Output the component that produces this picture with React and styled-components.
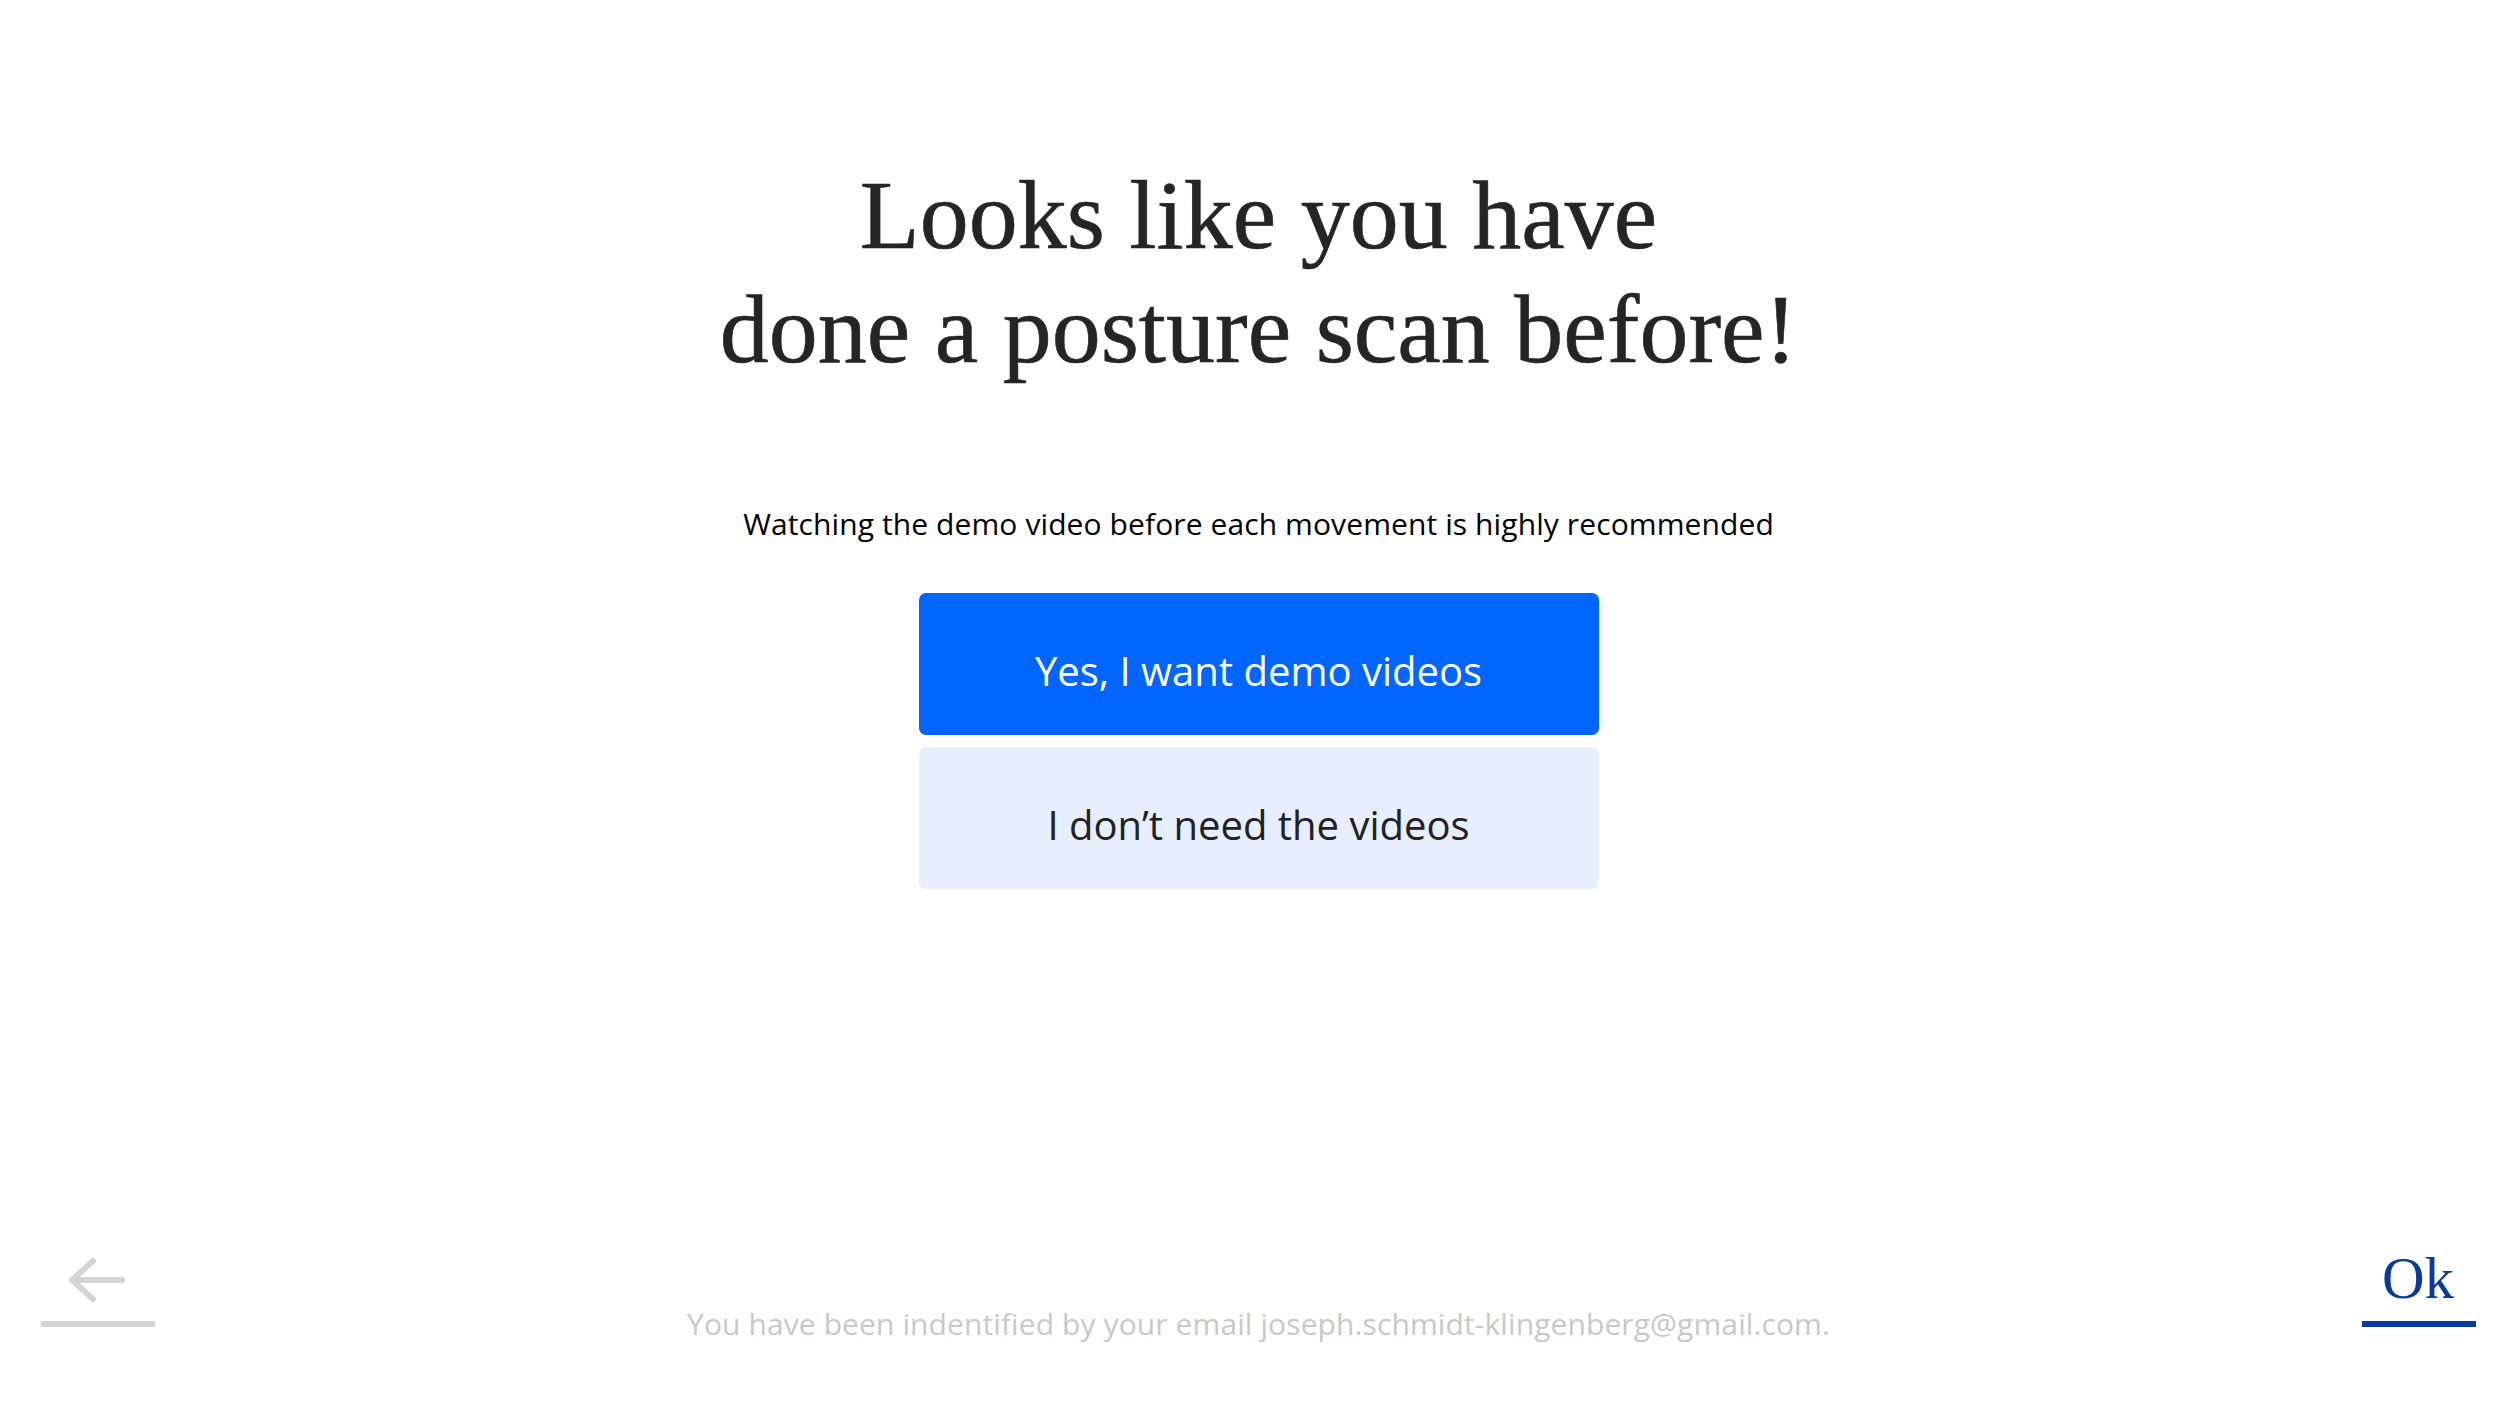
import React from "react";
import styled, { createGlobalStyle } from "styled-components";

const GlobalStyle = createGlobalStyle`
  html, body { margin: 0; padding: 0; background: #ffffff; }
  body { font-family: "Open Sans", "Noto Sans", sans-serif; }
  * { box-sizing: border-box; }
`;

const Page = styled.div`
  min-height: 100vh;
  display: flex;
  flex-direction: column;
  padding-left: 17px;
`;

const Main = styled.main`
  display: flex;
  flex-direction: column;
  align-items: center;
  padding-top: 158px;
`;

const Heading = styled.h1`
  margin: 0;
  font-family: "Liberation Serif", "DejaVu Serif", serif;
  font-weight: 400;
  font-size: 98px;
  line-height: 114px;
  color: #252525;
  text-align: center;
  -webkit-text-stroke: 0.6px #252525;
`;

const Subtitle = styled.p`
  margin: 119px 0 0;
  font-family: "Open Sans", sans-serif;
  font-size: 30px;
  line-height: 38px;
  letter-spacing: 0.1px;
  color: #000000;
  text-align: center;
`;

const Choices = styled.div`
  margin-top: 50px;
  display: flex;
  flex-direction: column;
  gap: 12px;
  width: 680px;
`;

const Choice = styled.button`
  height: 142px;
  border: none;
  border-radius: 7px;
  background: ${(p) => (p.$primary ? "#0066ff" : "#e6eeff")};
  color: ${(p) => (p.$primary ? "#ffffff" : "#222222")};
  font-family: "Open Sans", sans-serif;
  font-size: 40px;
  cursor: pointer;
  display: flex;
  align-items: center;
  justify-content: center;
  padding: 13px 0 0;
`;

const Footer = styled.footer`
  margin-top: auto;
  display: grid;
  grid-template-columns: 1fr auto 1fr;
  align-items: end;
  padding: 0 24px 64px;
`;

const NavButton = styled.button`
  justify-self: ${(p) => (p.$end ? "end" : "start")};
  width: 114px;
  margin-bottom: 16px;
  padding: 0 0 16px;
  border: none;
  border-bottom: 6px solid ${(p) => p.$color};
  background: transparent;
  display: flex;
  align-items: flex-end;
  justify-content: center;
  cursor: pointer;
`;

const OkLabel = styled.span`
  font-family: "Liberation Serif", "DejaVu Serif", serif;
  font-size: 59px;
  line-height: 1;
  color: #0a3aa0;
  margin-right: 2px;
  margin-bottom: -3px;
`;

const FooterNote = styled.p`
  margin: 0;
  font-family: "Open Sans", sans-serif;
  font-size: 30px;
  line-height: 38px;
  letter-spacing: 0.1px;
  color: #c8c8c8;
  text-align: center;
  white-space: nowrap;
`;

const BackArrow = () => (
  <svg width="58" height="46" viewBox="0 0 58 46" fill="none" stroke="#d4d4d4" strokeWidth="6" strokeLinecap="round" strokeLinejoin="round" style={{ marginLeft: -2, marginBottom: 2 }}>
    <path d="M25 4 L4 23 L25 42" />
    <path d="M4 23 H54" />
  </svg>
);

export default function App() {
  return (
    <>
      <GlobalStyle />
      <Page>
        <Main>
          <Heading>
            Looks like you have
            <br />
            done a posture scan before!
          </Heading>
          <Subtitle>Watching the demo video before each movement is highly recommended</Subtitle>
          <Choices>
            <Choice $primary>Yes, I want demo videos</Choice>
            <Choice>I don’t need the videos</Choice>
          </Choices>
        </Main>
        <Footer>
          <NavButton $color="#d4d4d4" aria-label="Back">
            <BackArrow />
          </NavButton>
          <FooterNote>You have been indentified by your email joseph.schmidt-klingenberg@gmail.com.</FooterNote>
          <NavButton $end $color="#0a3aa0">
            <OkLabel>Ok</OkLabel>
          </NavButton>
        </Footer>
      </Page>
    </>
  );
}
